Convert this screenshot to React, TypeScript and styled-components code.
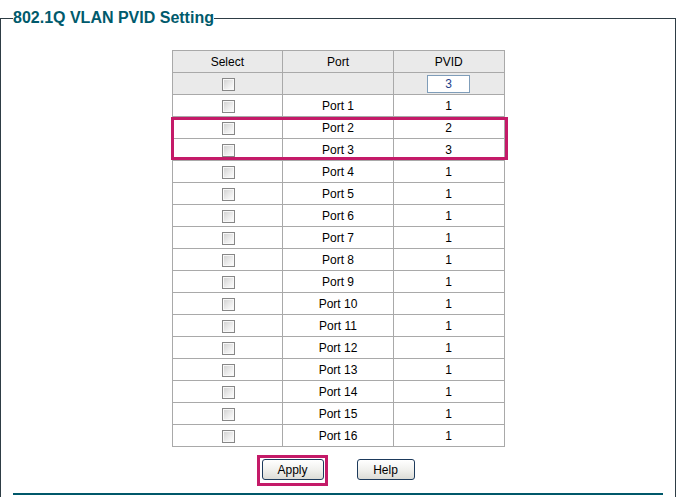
import React from 'react';
import styled, { createGlobalStyle } from 'styled-components';

const GlobalStyle = createGlobalStyle`
    html, body {
        margin: 0;
        padding: 0;
        background: #ffffff;
        font-family: 'Liberation Sans', Arial, sans-serif;
        overflow: hidden;
    }
`;

const Panel = styled.fieldset`
    margin: 9px 0 0 0;
    padding: 0 12px;
    border: 1px solid #2e3d45;
    border-bottom: none;
    min-height: 488px;
    box-sizing: border-box;
`;

const Legend = styled.legend`
    padding: 0;
    font-size: 16px;
    line-height: 18px;
    font-weight: bold;
    color: #005a6c;
`;

const Body = styled.div`
    display: flex;
    flex-direction: column;
    align-items: center;
    padding-top: 23px;
`;

const TableWrap = styled.div`
    position: relative;
`;

const Grid = styled.table`
    border-collapse: collapse;
    table-layout: fixed;
    width: 333px;
    font-size: 12px;
    color: #000;
`;

const HeadCell = styled.th`
    height: 21px;
    padding: 0;
    border: 1px solid #a9a9a9;
    background: #eaeaea;
    font-weight: normal;
    text-align: center;
`;

const Cell = styled.td<{ $shaded?: boolean }>`
    height: 21px;
    padding: 0;
    border: 1px solid #a9a9a9;
    background: ${(p) => (p.$shaded ? '#eaeaea' : '#ffffff')};
    text-align: center;
    vertical-align: middle;
`;

const Check = styled.span`
    display: inline-block;
    width: 13px;
    height: 13px;
    box-sizing: border-box;
    border: 1px solid #878787;
    background: linear-gradient(135deg, #cfcfcf 0%, #eeeeee 60%, #ffffff 100%);
    box-shadow: inset 0 0 0 1px #f8f8f8;
    vertical-align: top;
    margin: 2px 0 0 2px;
`;

const PvidInput = styled.input`
    width: 43px;
    height: 18px;
    box-sizing: border-box;
    border: 1px solid #7f9db9;
    padding: 0;
    font-family: 'Liberation Sans', Arial, sans-serif;
    font-size: 12px;
    color: #1f3f8a;
    text-align: center;
    vertical-align: middle;
    background: #fff;
`;

const Highlight = styled.div<{ $top: number; $left: number; $w: number; $h: number }>`
    position: absolute;
    top: ${(p) => p.$top}px;
    left: ${(p) => p.$left}px;
    width: ${(p) => p.$w}px;
    height: ${(p) => p.$h}px;
    box-sizing: border-box;
    border: 3px solid #c41a68;
    pointer-events: none;
`;

const Actions = styled.div`
    display: flex;
    justify-content: center;
    gap: 33px;
    margin-top: 12px;
`;

const ButtonBox = styled.div`
    position: relative;
`;

const Button = styled.button<{ $w: number }>`
    width: ${(p) => p.$w}px;
    height: 21px;
    padding: 0;
    border: 1px solid #1d3a5c;
    border-radius: 3px;
    background: linear-gradient(to bottom, #ffffff 0%, #f1f1ee 50%, #dcdcd6 100%);
    font-family: 'Liberation Sans', Arial, sans-serif;
    font-size: 12px;
    color: #000;
    cursor: pointer;
`;

const Rule = styled.div`
    align-self: stretch;
    margin-top: 13px;
    border-top: 2px solid #00586a;
`;

const ports = [1, 2, 3, 1, 1, 1, 1, 1, 1, 1, 1, 1, 1, 1, 1, 1];

export default function App() {
    return (
        <>
            <GlobalStyle />
            <Panel>
                <Legend>802.1Q VLAN PVID Setting</Legend>
                <Body>
                    <TableWrap>
                        <Grid>
                            <thead>
                                <tr>
                                    <HeadCell>Select</HeadCell>
                                    <HeadCell>Port</HeadCell>
                                    <HeadCell>PVID</HeadCell>
                                </tr>
                            </thead>
                            <tbody>
                                <tr>
                                    <Cell $shaded>
                                        <Check />
                                    </Cell>
                                    <Cell $shaded />
                                    <Cell $shaded>
                                        <PvidInput defaultValue="3" />
                                    </Cell>
                                </tr>
                                {ports.map((pvid, i) => (
                                    <tr key={i}>
                                        <Cell>
                                            <Check />
                                        </Cell>
                                        <Cell>Port {i + 1}</Cell>
                                        <Cell>{pvid}</Cell>
                                    </tr>
                                ))}
                            </tbody>
                        </Grid>
                        <Highlight $top={67} $left={-1} $w={337} $h={43} />
                    </TableWrap>
                    <Actions>
                        <ButtonBox>
                            <Button $w={62}>Apply</Button>
                            <Highlight $top={-4} $left={-5} $w={71} $h={31} />
                        </ButtonBox>
                        <Button $w={58}>Help</Button>
                    </Actions>
                    <Rule />
                </Body>
            </Panel>
        </>
    );
}
